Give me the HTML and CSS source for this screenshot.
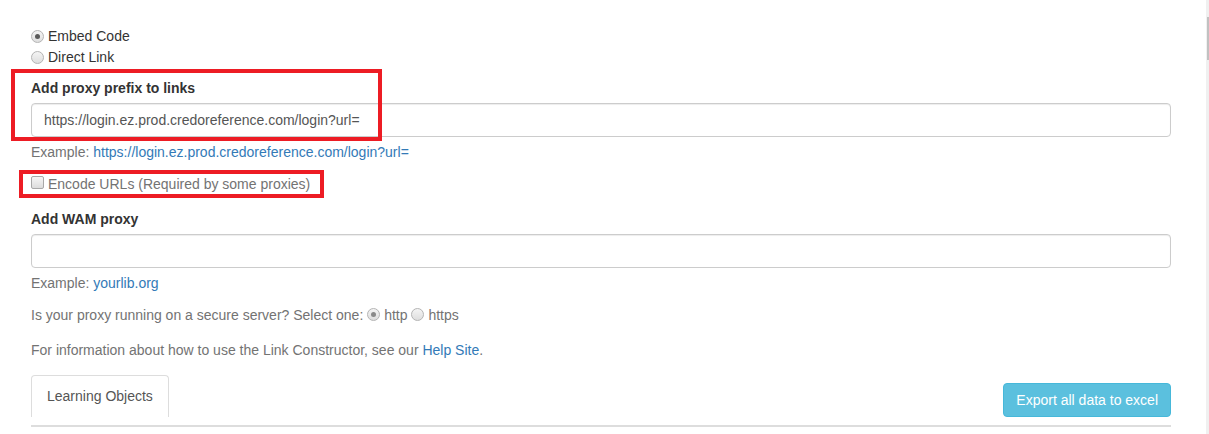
FILE: index.html
```html
<!DOCTYPE html>
<html lang="en">
<head>
    <meta charset="UTF-8">
    <title>Link Constructor</title>
    <link rel="stylesheet" href="styles.css">
</head>
<body>
    <div id="page">
        <div id="content">
            <div class="choice-list">
                <label class="choice"><span class="radio checked"></span>Embed Code</label>
                <label class="choice"><span class="radio"></span>Direct Link</label>
            </div>

            <div class="form-group first">
                <label class="field-label">Add proxy prefix to links</label>
                <div class="text-input">https://login.ez.prod.credoreference.com/login?url=</div>
                <p class="help">Example: <a href="#">https://login.ez.prod.credoreference.com/login?url=</a></p>
            </div>

            <label class="check-row"><span class="checkbox"></span>Encode URLs (Required by some proxies)</label>

            <div class="form-group wam">
                <label class="field-label">Add WAM proxy</label>
                <div class="text-input"></div>
                <p class="help">Example: <a href="#">yourlib.org</a></p>
            </div>

            <p class="note secure">Is your proxy running on a secure server? Select one:
                <span class="radio small checked"></span>http <span class="radio small"></span>https
            </p>

            <p class="note info">For information about how to use the Link Constructor, see our <a href="#">Help Site</a>.</p>

            <div class="tab-row">
                <div class="tab">Learning Objects</div>
                <button class="btn-export">Export all data to excel</button>
            </div>
            <div class="tab-line"></div>
        </div>

        <!-- annotation boxes drawn over the form -->
        <div class="mark mark-proxy"></div>
        <div class="mark mark-encode"></div>
    </div>
    <div id="scroll-strip"><div id="scroll-thumb"></div></div>
</body>
</html>
```

FILE: styles.css
```css
body {
    margin: 0;
    display: flex;
    height: 434px;
    overflow: hidden;
    background-color: #fff;
    font-family: "Liberation Sans", Arial, sans-serif;
    font-size: 14px;
    line-height: 20px;
    color: #333;
}
#page {
    position: relative;
    flex: 1;
}
#content {
    width: 1140px;
    padding: 26px 0 0 31px;
}
a {
    color: #337ab7;
    text-decoration: none;
}
p {
    margin: 0;
}

/* radios and checkboxes, old windows look */
.radio {
    display: inline-block;
    width: 11px;
    height: 11px;
    border: 1px solid #b4b4b4;
    border-radius: 50%;
    background: linear-gradient(#f4f4f4, #dedede);
    position: relative;
    flex-shrink: 0;
    vertical-align: -1px;
}
.radio.checked::after {
    content: "";
    position: absolute;
    left: 3px;
    top: 3px;
    width: 5px;
    height: 5px;
    border-radius: 50%;
    background-color: #5a5a5a;
}
.radio.small {
    margin: 0 4px 0 0;
}
.radio.small.checked::after {
    background-color: #8a8a8a;
}
.checkbox {
    display: inline-block;
    width: 11px;
    height: 11px;
    border: 1px solid #a8a8a8;
    border-radius: 2px;
    background: linear-gradient(#f6f6f6, #dcdcdc);
    flex-shrink: 0;
}

.choice-list {
    display: flex;
    flex-direction: column;
    gap: 1px;
}
.choice {
    display: flex;
    align-items: center;
    gap: 4px;
    height: 20px;
}

.form-group.first {
    margin-top: 11px;
}
.form-group.wam {
    margin-top: 15px;
}
.field-label {
    display: block;
    font-weight: bold;
    margin-bottom: 5px;
}
.text-input {
    height: 20px;
    padding: 6px 12px;
    border: 1px solid #ccc;
    border-radius: 4px;
    box-shadow: inset 0 1px 1px rgba(0, 0, 0, 0.075);
    color: #555;
}
.help {
    margin-top: 5px;
    color: #737373;
}

.check-row {
    display: flex;
    align-items: center;
    gap: 4px;
    height: 20px;
    margin-top: 12px;
    color: #737373;
}
.check-row .checkbox {
    margin-top: -4px;
}

.note {
    color: #737373;
}
.note.secure {
    margin-top: 12px;
}
.note.info {
    margin-top: 15px;
}

.tab-row {
    display: flex;
    justify-content: space-between;
    align-items: flex-end;
    margin-top: 15px;
}
.tab {
    padding: 10px 15px 11px 15px;
    border: 1px solid #ddd;
    border-bottom: none;
    border-radius: 4px 4px 0 0;
    color: #555;
}
.btn-export {
    font-family: inherit;
    font-size: 14px;
    line-height: 20px;
    padding: 6px 12px;
    color: #fff;
    background-color: #5bc0de;
    border: 1px solid #46b8da;
    border-radius: 4px;
    cursor: pointer;
}
.tab-line {
    margin-top: 8px;
    border-top: 2px solid #ddd;
}

.mark {
    position: absolute;
    border: 4px solid #ed1c24;
}
.mark-proxy {
    left: 11px;
    top: 69px;
    width: 363px;
    height: 64px;
}
.mark-encode {
    left: 19px;
    top: 170px;
    width: 297px;
    height: 20px;
}

#scroll-strip {
    width: 3px;
    background-color: #f0f0f0;
    position: relative;
}
#scroll-thumb {
    position: absolute;
    right: 0;
    top: 17px;
    width: 2px;
    height: 43px;
    background-color: #c1c1c1;
}
```
